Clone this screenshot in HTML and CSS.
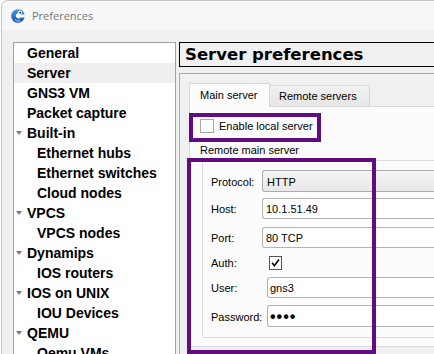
FILE: index.html
```html
<!DOCTYPE html>
<html>
<head>
<meta charset="utf-8">
<link rel="stylesheet" href="styles.css">
</head>
<body>
<div class="window">
  <div class="titlebar">
    <svg class="logo" width="16" height="16" viewBox="0 0 16 16">
      <defs>
        <linearGradient id="lg" x1="0" y1="0" x2="0" y2="1">
          <stop offset="0" stop-color="#4a9be8"/>
          <stop offset="1" stop-color="#1d4fa6"/>
        </linearGradient>
      </defs>
      <path d="M8 1.2 A6.8 6.8 0 1 0 14.6 9.5 L10.5 9.5 A2.6 2.6 0 1 1 10.8 6.6 L14.6 6.6 A6.8 6.8 0 0 0 8 1.2 Z" fill="url(#lg)"/>
      <circle cx="10" cy="4.6" r="2" fill="#fff"/>
      <circle cx="10.3" cy="4.7" r="0.9" fill="#123"/>
      <path d="M5 11.5 q2 2.5 5 1" stroke="#7fd0ff" stroke-width="1.2" fill="none"/>
    </svg>
    <span class="title">Preferences</span>
  </div>
  <div class="main">
    <div class="tree">
      <div class="item"><span class="twisty"></span>General</div>
      <div class="item selected"><span class="twisty"></span>Server</div>
      <div class="item"><span class="twisty"></span>GNS3 VM</div>
      <div class="item"><span class="twisty"></span>Packet capture</div>
      <div class="item"><span class="twisty open"></span>Built-in</div>
      <div class="item child"><span class="twisty"></span>Ethernet hubs</div>
      <div class="item child"><span class="twisty"></span>Ethernet switches</div>
      <div class="item child"><span class="twisty"></span>Cloud nodes</div>
      <div class="item"><span class="twisty open"></span>VPCS</div>
      <div class="item child"><span class="twisty"></span>VPCS nodes</div>
      <div class="item"><span class="twisty open"></span>Dynamips</div>
      <div class="item child"><span class="twisty"></span>IOS routers</div>
      <div class="item"><span class="twisty open"></span>IOS on UNIX</div>
      <div class="item child"><span class="twisty"></span>IOU Devices</div>
      <div class="item"><span class="twisty open"></span>QEMU</div>
      <div class="item child"><span class="twisty"></span>Qemu VMs</div>
    </div>
    <div class="right">
      <div class="header">Server preferences</div>
      <div class="frame">
        <div class="tabs">
          <div class="tab active">Main server</div>
          <div class="tab">Remote servers</div>
        </div>
        <div class="pane">
          <div class="check-row">
            <span class="checkbox"></span>
            <span>Enable local server</span>
          </div>
          <div class="group-title">Remote main server</div>
          <div class="group">
            <div class="row r-protocol">
              <span class="label w1">Protocol:</span>
              <span class="combo">HTTP</span>
            </div>
            <div class="row r-host">
              <span class="label w1">Host:</span>
              <span class="field">10.1.51.49</span>
            </div>
            <div class="row r-port">
              <span class="label w1">Port:</span>
              <span class="field">80 TCP</span>
            </div>
            <div class="row r-auth">
              <span class="label w2">Auth:</span>
              <span class="checkbox checked">
                <svg width="12" height="12" viewBox="0 0 12 12"><path d="M2.3 5.8 L4.8 9 L9.8 2.3" stroke="#000" stroke-width="1.8" fill="none"/></svg>
              </span>
            </div>
            <div class="row r-user">
              <span class="label w2">User:</span>
              <span class="field f2">gns3</span>
            </div>
            <div class="row r-pass">
              <span class="label w2">Password:</span>
              <span class="field f2 dots">••••</span>
            </div>
          </div>
        </div>
      </div>
    </div>
  </div>
  <div class="mark mark-check"></div>
  <div class="mark mark-form"></div>
</div>
</body>
</html>
```
FILE: styles.css
```css
html, body {
  margin: 0;
  padding: 0;
  background: #ffffff;
  width: 434px;
  height: 354px;
  overflow: hidden;
}

.window {
  position: relative;
  box-sizing: border-box;
  width: 433px;
  height: 354px;
  margin-left: 1px;
  border-left: 1px solid #c6c6c6;
  border-top: 1px solid #c6c6c6;
  border-top-left-radius: 7px;
  background: #f0f0f0;
  overflow: hidden;
  font-family: "Liberation Sans", Arial, sans-serif;
  font-size: 11px;
  color: #000;
}

.titlebar {
  height: 29px;
  display: flex;
  align-items: center;
  gap: 6px;
  padding-left: 8px;
  background: #f7f7f7;
}

.logo {
  flex: none;
}

.title {
  font-family: "Open Sans", "Liberation Sans", sans-serif;
  font-size: 11px;
  color: #777;
}

.main {
  display: flex;
  align-items: flex-start;
  padding: 12px 0 0 11px;
}

.tree {
  flex: none;
  width: 161px;
  height: 330px;
  border: 1px solid #a0a0a0;
  border-bottom: none;
  background: #fff;
}

.item {
  height: 20px;
  display: flex;
  align-items: center;
  font-weight: bold;
  font-size: 14px;
  white-space: nowrap;
}

.item.selected {
  background: #efefef;
}

.item.child {
  padding-left: 10px;
}

.twisty {
  flex: none;
  width: 13px;
  height: 20px;
  display: flex;
  align-items: center;
}

.twisty.open::before {
  content: "";
  display: block;
  width: 0;
  height: 0;
  margin-left: 2px;
  border-left: 3px solid transparent;
  border-right: 3px solid transparent;
  border-top: 4px solid #7a7a7a;
}

.right {
  flex: none;
  width: 300px;
  margin-left: 3px;
}

.header {
  height: 23px;
  border: 1px solid #000;
  border-right: none;
  padding-left: 5px;
  font-family: "DejaVu Sans", Verdana, sans-serif;
  font-weight: bold;
  font-size: 16.5px;
  line-height: 23px;
  white-space: nowrap;
}

.frame {
  margin-top: 6px;
  height: 300px;
  border-top: 1px solid #a8a8a8;
  border-left: 1px solid #a8a8a8;
  padding: 9px 0 0 9px;
}

.tabs {
  display: flex;
  align-items: flex-end;
  height: 23px;
}

.tab {
  box-sizing: border-box;
  border: 1px solid #d9d9d9;
  border-bottom: none;
  white-space: nowrap;
}

.tab.active {
  position: relative;
  z-index: 1;
  width: 81px;
  height: 24px;
  margin-bottom: -1px;
  padding-left: 10px;
  line-height: 23px;
  background: #fcfcfc;
}

.tab:not(.active) {
  width: 100px;
  height: 21px;
  padding-left: 9px;
  line-height: 21px;
  border-left: none;
  background: linear-gradient(#f1f1f1, #e6e6e6);
}

.pane {
  border: 1px solid #d9d9d9;
  border-right: none;
  background: #fcfcfc;
  padding: 11px 0 8px 10px;
}

.check-row {
  display: flex;
  align-items: center;
  gap: 5px;
  height: 14px;
  padding-top: 1px;
}

.checkbox {
  box-sizing: border-box;
  flex: none;
  width: 14px;
  height: 14px;
  border: 1px solid #a8a8a8;
  background: #fff;
  display: flex;
  align-items: center;
  justify-content: center;
}

.checkbox.checked {
  width: 13px;
  height: 14px;
  margin-left: 2px;
  border-color: #555;
}

.group-title {
  margin-top: 11px;
  line-height: 13px;
  white-space: nowrap;
}

.group {
  margin-top: 3px;
  margin-left: 2px;
  border: 1px solid #dcdcdc;
  border-right: none;
  border-radius: 2px 0 0 2px;
  padding: 9px 0 10px 8px;
}

.row {
  display: flex;
  align-items: center;
  height: 21px;
}

.r-protocol { height: 22px; }
.r-host { margin-top: 6px; }
.r-port { margin-top: 8px; }
.r-auth { margin-top: 4px; }
.r-user { margin-top: 4px; }
.r-pass { margin-top: 7px; height: 22px; }

.label {
  flex: none;
  padding-top: 1px;
  white-space: nowrap;
}

.label.w1 { width: 51px; }
.label.w2 { width: 56px; }

.combo,
.field {
  box-sizing: border-box;
  flex: none;
  width: 240px;
  height: 100%;
  display: flex;
  align-items: center;
  padding-left: 3px;
  padding-top: 1px;
  border: 1px solid #b4b4b4;
  border-right: none;
  border-radius: 3px 0 0 3px;
  background: #fff;
  white-space: nowrap;
}

.combo {
  padding-left: 4px;
  background: linear-gradient(#f5f5f5, #e8e8e8);
  border-color: #acacac;
}

.field.f2 {
  padding-left: 2px;
}

.dots {
  font-size: 16px;
  font-weight: bold;
  letter-spacing: 1px;
  padding-left: 4px;
}

.mark {
  position: absolute;
  box-sizing: border-box;
  border: 4px solid #610c80;
  pointer-events: none;
}

.mark-check {
  left: 187px;
  top: 112px;
  width: 132px;
  height: 29px;
}

.mark-form {
  left: 185px;
  top: 157px;
  width: 189px;
  height: 196px;
}
```
